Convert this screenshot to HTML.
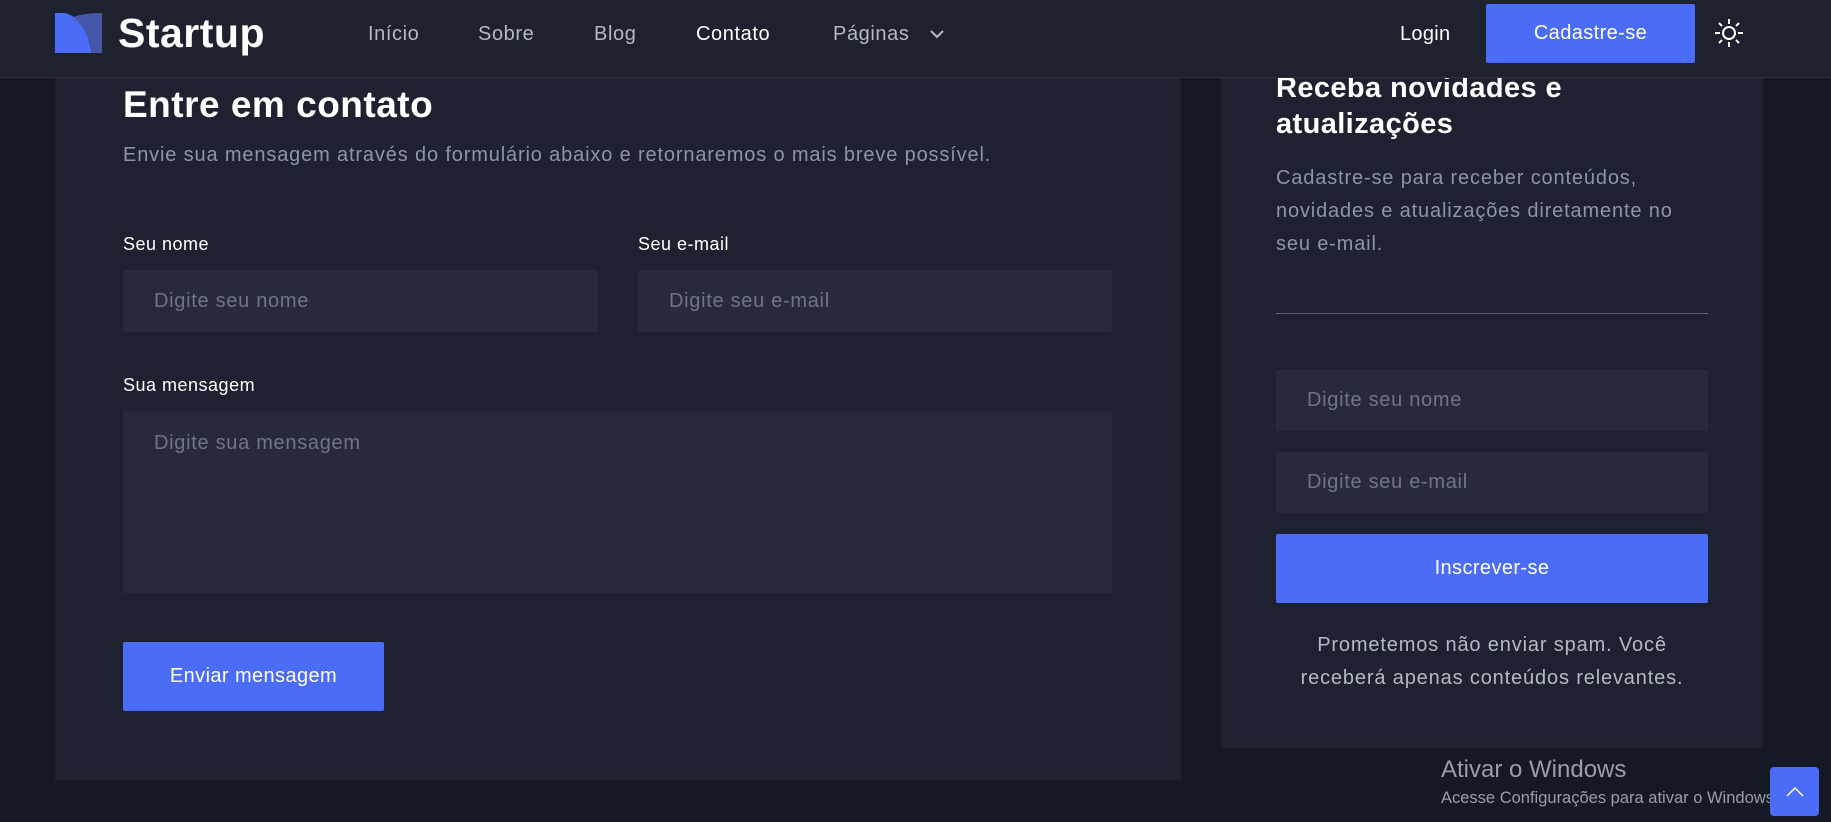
<!DOCTYPE html>
<html><head><meta charset="utf-8"><style>
*{margin:0;padding:0;box-sizing:border-box}
body{width:1831px;height:822px;background:#151925;font-family:"Liberation Sans",sans-serif;position:relative;overflow:hidden;color:#fff}
.a{position:absolute;white-space:nowrap}
nav{position:absolute;left:0;top:0;width:1831px;height:78px;background:#1e222f;border-bottom:1px solid #2b2f3c;z-index:5}
.nl{font-size:20px;color:#b4b9c6;top:23px;letter-spacing:0.6px}
.card{position:absolute;background:#1e2230}
.inp{position:absolute;background:#272b39;color:#6f7586;font-size:20px;letter-spacing:0.7px;padding-left:31px;display:flex;align-items:center;border-radius:2px}
.btn{position:absolute;background:#4a6cf7;color:#fff;font-size:20px;letter-spacing:0.4px;display:flex;align-items:center;justify-content:center;border-radius:2px}
.lbl{font-size:18px;color:#fff;letter-spacing:0.5px}
.p{font-size:20px;letter-spacing:0.85px}
</style></head><body>
<nav>
<svg class="a" style="left:55px;top:13px" width="48" height="40" viewBox="0 0 48 40"><path d="M0 0H10Q30 5 37 40H0Z" fill="#4a6cf7"/><path d="M16 5Q26 0 47 0V40H37Q34 16 16 5Z" fill="#4f64c8" opacity=".8"/></svg>
<div class="a" style="left:118px;top:10px;font-size:41px;font-weight:bold;letter-spacing:0.5px">Startup</div>
<div class="a nl" style="left:368px">Início</div>
<div class="a nl" style="left:478px">Sobre</div>
<div class="a nl" style="left:594px">Blog</div>
<div class="a nl" style="left:696px;color:#fff">Contato</div>
<div class="a nl" style="left:833px">Páginas</div>
<svg class="a" style="left:928px;top:28px" width="18" height="12" viewBox="0 0 18 12"><path d="M3 3L9 9L15 3" stroke="#b4b9c6" stroke-width="2" fill="none"/></svg>
<div class="a" style="left:1400px;top:23px;font-size:20px;letter-spacing:0.3px">Login</div>
<div class="btn" style="left:1486px;top:4px;width:209px;height:59px">Cadastre-se</div>
<svg class="a" style="left:1714px;top:18px" width="30" height="30" viewBox="0 0 30 30" stroke="#fff" stroke-width="2" fill="none"><circle cx="15" cy="15" r="6"/><path d="M15 1v5M15 24v5M1 15h5M24 15h5M5 5l3 3M22 22l3 3M25 5l-3 3M8 22l-3 3"/></svg>
</nav>
<div class="card" style="left:55px;top:60px;width:1126px;height:720px"></div>
<div class="a" style="left:123px;top:84px;font-size:37px;font-weight:bold;letter-spacing:0.5px">Entre em contato</div>
<div class="a p" style="left:123px;top:144px;color:#8d94a8">Envie sua mensagem através do formulário abaixo e retornaremos o mais breve possível.</div>
<div class="a lbl" style="left:123px;top:234px">Seu nome</div>
<div class="a lbl" style="left:638px;top:234px">Seu e-mail</div>
<div class="inp" style="left:123px;top:270px;width:475px;height:62px">Digite seu nome</div>
<div class="inp" style="left:638px;top:270px;width:474px;height:62px">Digite seu e-mail</div>
<div class="a lbl" style="left:123px;top:375px">Sua mensagem</div>
<div class="inp" style="left:123px;top:411px;width:989px;height:182px;align-items:flex-start;padding-top:21px">Digite sua mensagem</div>
<div class="btn" style="left:123px;top:642px;width:261px;height:69px">Enviar mensagem</div>
<div class="card" style="left:1221px;top:60px;width:542px;height:688px"></div>
<div class="a" style="left:1276px;top:70px;font-size:29px;font-weight:bold;line-height:36px;letter-spacing:0.4px">Receba novidades e<br>atualizações</div>
<div class="a p" style="left:1276px;top:162px;color:#8d94a8;line-height:33px">Cadastre-se para receber conteúdos,<br>novidades e atualizações diretamente no<br>seu e-mail.</div>
<div class="a" style="left:1276px;top:313px;width:432px;height:1px;background:#5a5f6e"></div>
<div class="inp" style="left:1276px;top:370px;width:432px;height:61px">Digite seu nome</div>
<div class="inp" style="left:1276px;top:452px;width:432px;height:61px">Digite seu e-mail</div>
<div class="btn" style="left:1276px;top:534px;width:432px;height:69px">Inscrever-se</div>
<div class="a p" style="left:1256px;top:629px;width:472px;text-align:center;color:#b4b9c6;line-height:33px;white-space:normal">Prometemos não enviar spam. Você<br>receberá apenas conteúdos relevantes.</div>
<div class="a" style="left:1441px;top:756px;font-size:24px;color:#9a9ea8">Ativar o Windows</div>
<div class="a" style="left:1441px;top:789px;font-size:16.5px;color:#9a9ea8">Acesse Configurações para ativar o Windows.</div>
<div class="btn" style="left:1770px;top:767px;width:49px;height:49px;border-radius:4px"><svg width="20" height="12" viewBox="0 0 20 12"><path d="M2 10L10 2L18 10" stroke="#fff" stroke-width="1.5" fill="none"/></svg></div>
</body></html>
